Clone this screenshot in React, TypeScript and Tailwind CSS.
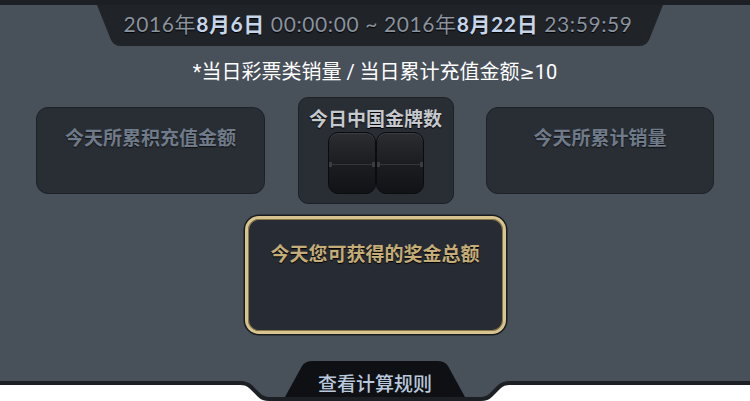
import React from "react";

function DigitBox() {
  return (
    <div className="relative w-[48px] h-[62px] rounded-[10px] border border-[#0b0c0e] bg-gradient-to-b from-[#2b2d31] via-[#1c1d20] to-[#121316] shadow-[inset_0_1px_0_#3a3c41]">
      <div className="absolute left-0 right-0 top-[31px] h-px bg-[#34363b]" />
      <div className="absolute left-0 top-[29px] w-[3px] h-[5px] bg-[#3a3c41]" />
      <div className="absolute right-0 top-[29px] w-[3px] h-[5px] bg-[#3a3c41]" />
    </div>
  );
}

export default function App() {
  const cjk = "font-['Noto_Sans_CJK_SC','Noto_Sans',sans-serif]";
  return (
    <div className={`relative w-[750px] h-[401px] bg-white overflow-hidden ${cjk}`}>
      <div className="h-[385px] bg-[#48505a] border-t-[5px] border-b-[4px] border-[#1c1f23] flex flex-col">
        {/* top tab */}
        <div className="relative ml-[97px] w-[566px] h-[41px] flex items-center justify-center">
          <svg className="absolute inset-0" width="566" height="41" viewBox="0 0 566 41">
            <path d="M0,0 L566,0 L552,35 Q549,41 542,41 L24,41 Q17,41 14,35 Z" fill="#202328" />
          </svg>
          <div className="relative -ml-[4px] -mt-[3px] text-[21px] leading-[24px] tracking-[0.6px] text-[#8a939e] font-['Lato','Noto_Sans_CJK_SC',sans-serif] whitespace-nowrap [text-shadow:0_1px_1px_#000]">
            <span>2016年</span>
            <span className="text-[#c6d5ea] font-bold">8月6日</span>
            <span> 00:00:00 ~ 2016年</span>
            <span className="text-[#c6d5ea] font-bold">8月22日</span>
            <span> 23:59:59</span>
          </div>
        </div>

        {/* heading */}
        <div className="mt-[14px] text-center text-[20px] leading-[24px] font-normal text-white font-['Roboto','Noto_Sans_CJK_SC',sans-serif]">
          *当日彩票类销量 / 当日累计充值金额<span className="font-['DejaVu_Sans',sans-serif] text-[18px]">≥</span>10
        </div>

        {/* cards row */}
        <div className="mt-[12px] flex items-start justify-between px-[36px]">
          <div className="mt-[10px] w-[229px] h-[87px] rounded-[12px] bg-[#292d34] border border-[#1e2126] pt-[16px] text-center text-[19px] leading-[26px] font-bold text-[#6f7b8a] [text-shadow:0_1px_1px_#111]">
            今天所累积充值金额
          </div>
          <div className="w-[156px] h-[107px] rounded-[10px] bg-[#292d34] border border-[#1e2126] flex flex-col items-center">
            <div className="mt-[7px] text-[19px] leading-[26px] font-bold text-[#c5c9ce] [text-shadow:0_1px_1px_#000]">
              今日中国金牌数
            </div>
            <div className="mt-[1px] flex">
              <DigitBox />
              <DigitBox />
            </div>
          </div>
          <div className="mt-[10px] w-[228px] h-[87px] rounded-[12px] bg-[#292d34] border border-[#1e2126] pt-[16px] text-center text-[19px] leading-[26px] font-bold text-[#6f7b8a] [text-shadow:0_1px_1px_#111]">
            今天所累计销量
          </div>
        </div>

        {/* gold card */}
        <div className="mt-[12px] self-center w-[261px] h-[118px] rounded-[14px] border-[3px] border-[#d8c48e] bg-[#272b33] shadow-[0_0_0_1.5px_#1a1c20,inset_0_0_0_1px_#8c7748] pt-[21px] text-center text-[19px] leading-[26px] font-bold text-[#c4ad78] [text-shadow:0_1px_1px_#000]">
          今天您可获得的奖金总额
        </div>
      </div>

      {/* bottom dip + tab decoration */}
      <svg className="absolute left-0 top-[355px]" width="750" height="46" viewBox="0 0 750 46">
        <path
          d="M0,0 L750,0 L750,28 L510,28 Q503,28 499,32 L491,40 Q487,44 481,44 L269,44 Q263,44 259,40 L251,32 Q247,28 240,28 L0,28 Z"
          fill="#48505a"
        />
        <path
          d="M0,28 L240,28 Q247,28 251,32 L259,40 Q263,44 269,44 L481,44 Q487,44 491,40 L499,32 Q503,28 510,28 L750,28"
          fill="none"
          stroke="#1c1f23"
          strokeWidth="4"
        />
        <path d="M285,42 L302,11 Q305,6 313,6 L437,6 Q445,6 448,11 L465,42 Z" fill="#0e1013" />
      </svg>
      <div className="absolute left-0 right-0 top-[371px] text-center text-[19px] leading-[24px] font-medium text-[#b9c8dc]">
        查看计算规则
      </div>
    </div>
  );
}
